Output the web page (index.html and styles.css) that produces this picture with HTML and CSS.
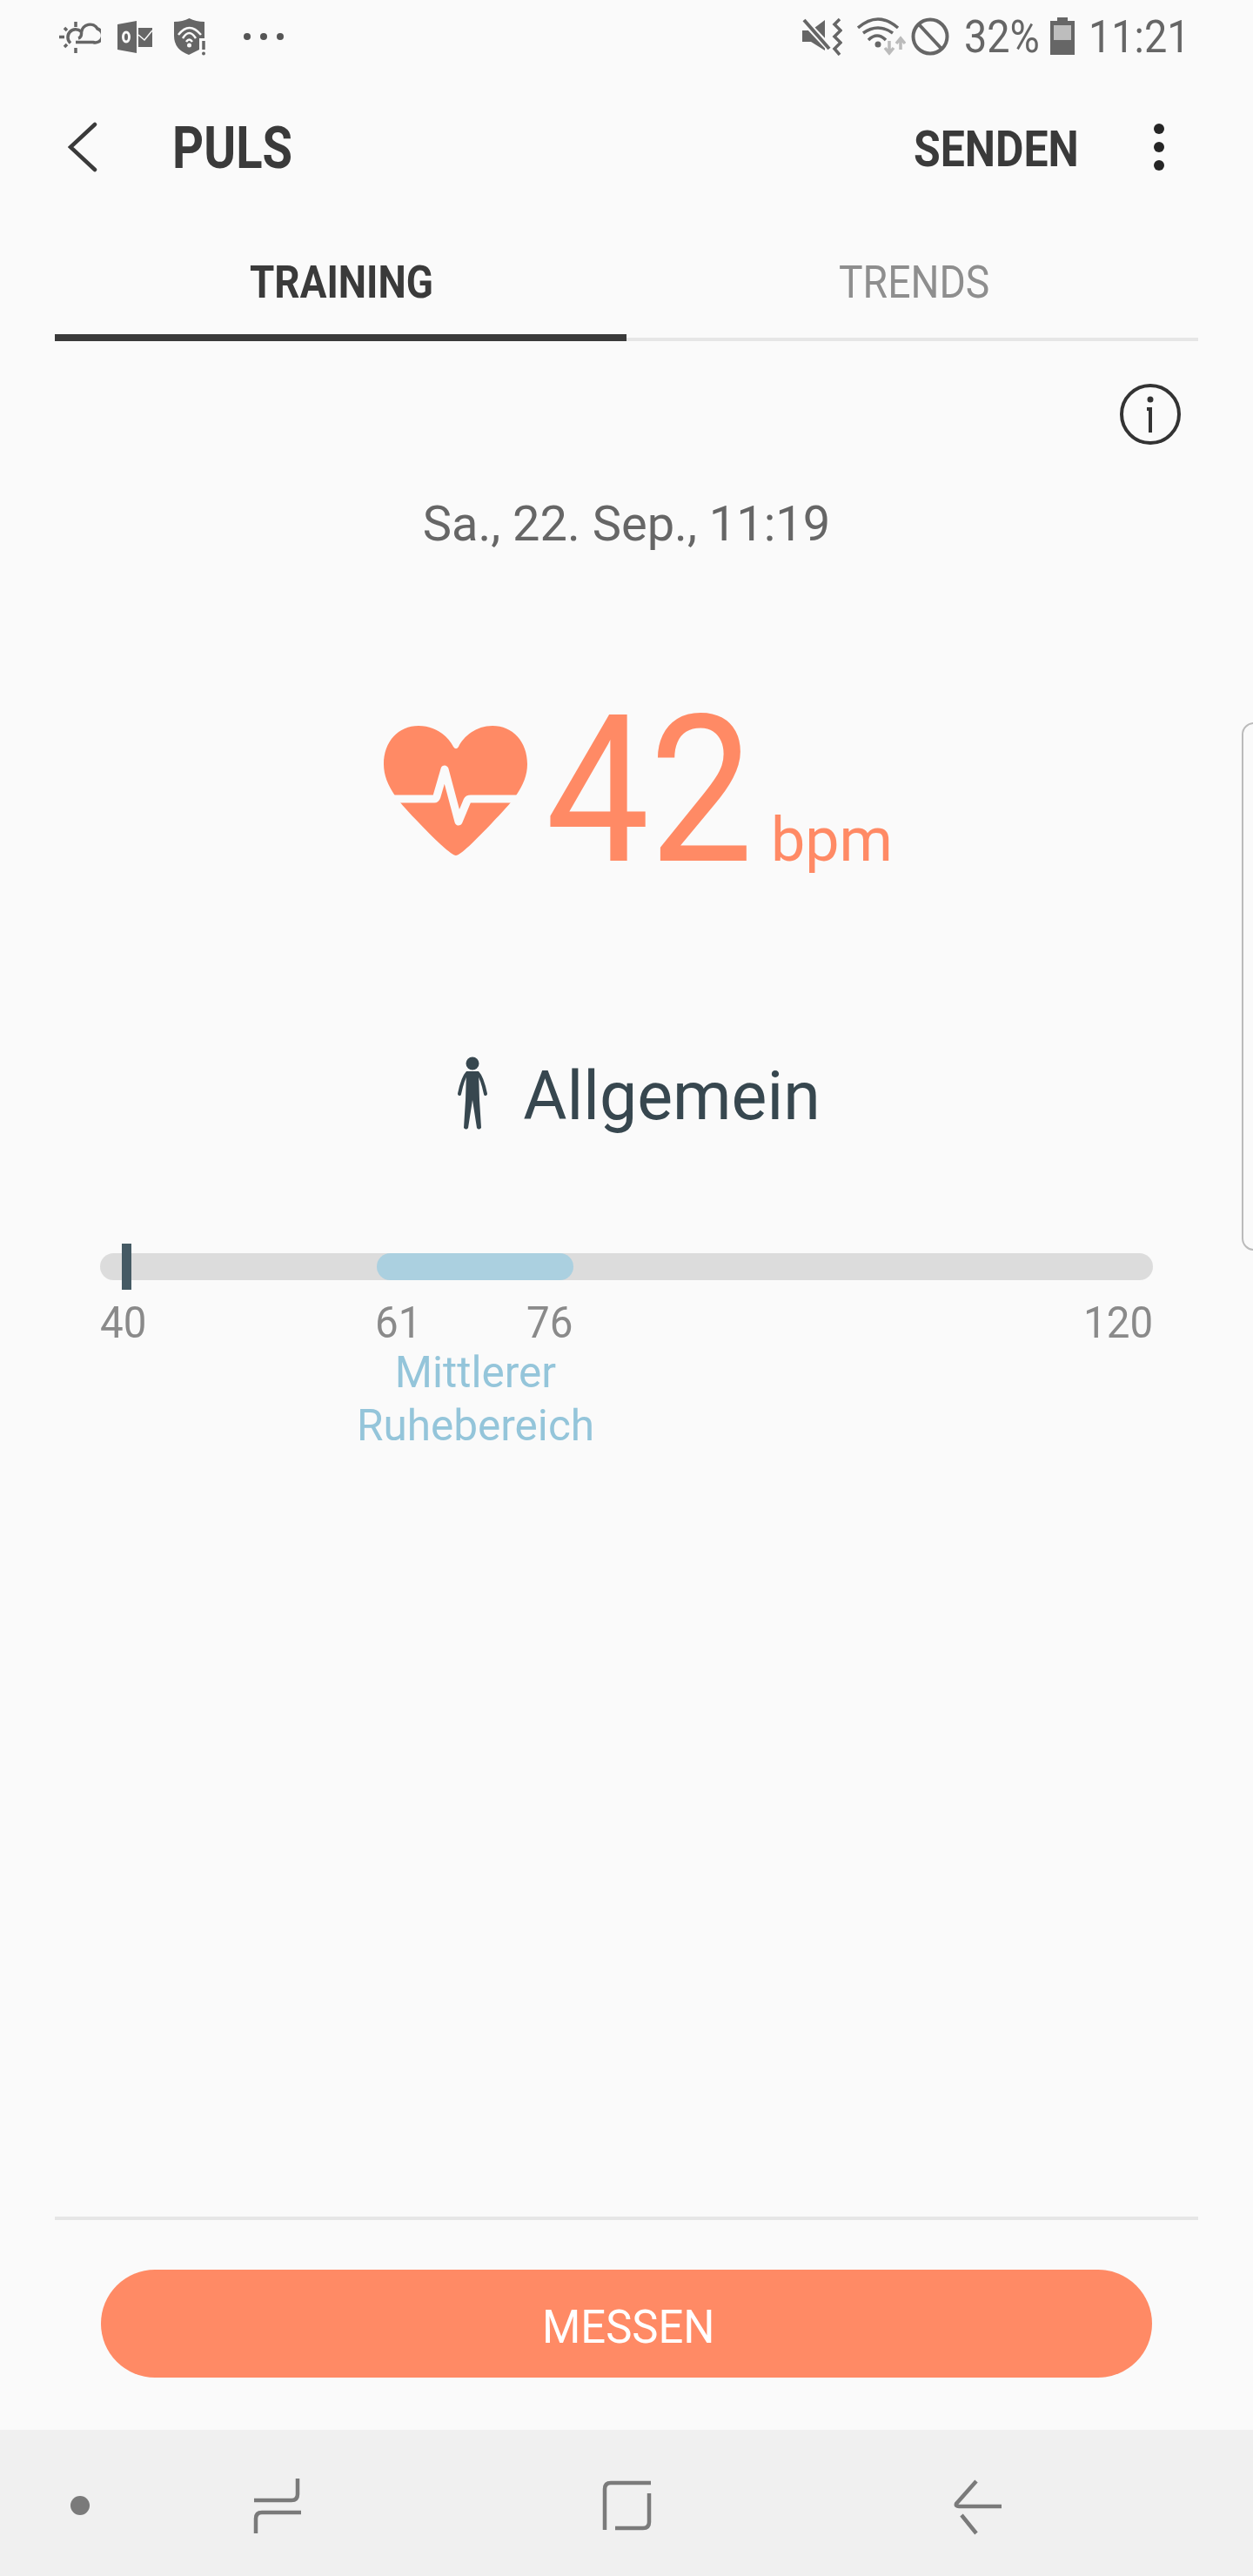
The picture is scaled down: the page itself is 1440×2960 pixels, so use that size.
FILE: index.html
```html
<!DOCTYPE html>
<html lang="de">
<head>
  <meta charset="UTF-8">
  <meta name="viewport" content="width=device-width, initial-scale=1.0">
  <title>Puls</title>
  <link rel="stylesheet" href="styles.css">
</head>
<body>
  <div class="screen">
    <!-- Statusleiste -->
    <div class="status">
      <div class="status-left">
        <svg class="ic-weather" width="48" height="38" viewBox="0 0 48 38" fill="none" stroke="#666" stroke-width="3.500">
          <path d="M22 19Q26 18 25.500 12A10 10 0 0 1 44 8A8 8 0 0 1 39 23.500H19"/>
          <path d="M25 11A9 9 0 1 0 13 24.500"/>
          <path d="M19 0V6M19 30V36M0 17.500H6M6 7l3 3M9 26l-3 3" stroke-width="3.500"/>
        </svg>
        <svg class="ic-outlook" width="40" height="38" viewBox="0 0 40 38">
          <path d="M0 4 22 0V37L0 33Z" fill="#666"/>
          <path d="M24 8H40V30H24Z" fill="#666"/>
          <path d="M24 16l7 6 9-11" fill="none" stroke="#fafafa" stroke-width="1.500"/>
          <ellipse cx="10" cy="18.500" rx="3.500" ry="5.500" fill="none" stroke="#fafafa" stroke-width="3"/>
        </svg>
        <svg class="ic-shield" width="38" height="43" viewBox="0 0 38 43">
          <path d="M0 4Q10 4 17.500 0Q25 4 35 4V23H29V36L17 42Q0 36 0 20Z" fill="#666"/>
          <path d="M5 19Q17.500 3 31 19M10 23Q17.500 11 25 23M14 27Q17.500 22 21 27" fill="none" stroke="#fafafa" stroke-width="2.500"/>
          <circle cx="17.500" cy="31" r="2.500" fill="#fafafa"/>
          <path d="M34 26V36" stroke="#666" stroke-width="3.500"/>
          <circle cx="34" cy="40.500" r="2" fill="#666"/>
        </svg>
        <div class="more-dots"><span></span><span></span><span></span></div>
      </div>
      <div class="status-right">
        <svg class="ic-mute" width="46" height="44" viewBox="0 0 46 44">
          <path d="M0 15H10L26 3V38L10 28H0Z" fill="#666"/>
          <path d="M3 5 31 35" stroke="#fafafa" stroke-width="8"/>
          <path d="M2 3 31 36" stroke="#666" stroke-width="4"/>
          <path d="M0 15H7V28H0Z" fill="#666"/>
          <path d="M43 2 37 8 44 15 37 22 44 29 37 36 43 43" fill="none" stroke="#666" stroke-width="3.500"/>
        </svg>
        <svg class="ic-wifi" width="56" height="44" viewBox="0 0 56 44">
          <path d="M1 12Q24 -8 47 12M7 18Q24 6 41 18M13 26Q23 16 33 26" fill="none" stroke="#666" stroke-width="3.500"/>
          <circle cx="24" cy="31" r="3.500" fill="#666"/>
          <path d="M37 27V41M32 35l5 6 5-6" fill="none" stroke="#bbb" stroke-width="3.500"/>
          <path d="M50 37V24M45 30l5-6 5 6" fill="none" stroke="#bbb" stroke-width="3.500"/>
        </svg>
        <svg class="ic-block" width="44" height="44" viewBox="0 0 44 44" fill="none" stroke="#666" stroke-width="4">
          <circle cx="22" cy="22" r="19.500"/>
          <path d="M9 8 35 36"/>
        </svg>
        <span class="status-pct"><span class="narrow">32%</span></span>
        <svg class="ic-battery" width="28" height="43" viewBox="0 0 28 43">
          <path d="M8 0H20V4H28V43H0V4H8Z" fill="#666"/>
          <path d="M4 9H24V26H4Z" fill="#bdbdbd"/>
        </svg>
        <span class="status-time"><span class="narrow">11:21</span></span>
      </div>
    </div>

    <!-- Titelleiste -->
    <div class="appbar">
      <svg class="back" width="34" height="58" viewBox="0 0 34 58" fill="none" stroke="#3a3a3a" stroke-width="4.500" stroke-linecap="round">
        <path d="M31 3 3 29 31 55"/>
      </svg>
      <div class="title"><span class="narrow">PULS</span></div>
      <div class="send"><span class="narrow">SENDEN</span></div>
      <div class="menu"><span></span><span></span><span></span></div>
    </div>

    <div class="tabs">
      <div class="tab active"><span class="narrow">TRAINING</span></div>
      <div class="tab"><span class="narrow">TRENDS</span></div>
    </div>

    <div class="main">
      <div class="info-row">
        <svg width="70" height="70" viewBox="0 0 70 70" fill="none" stroke="#333" stroke-width="4">
          <circle cx="35" cy="35" r="33"/>
          <path d="M31 29H35V56"/>
          <circle cx="35" cy="18" r="1.500" fill="#333"/>
        </svg>
      </div>
      <div class="date">Sa., 22. Sep., 11:19</div>

      <div class="reading">
        <svg class="heart" width="166" height="150" viewBox="0 0 166 150">
          <path d="M83 149 C78 149 60 132 40 111 C20 90 0 70 0 44 C0 18 17 0 40 0 C60 0 74 12 80 24 C82 27 84 27 86 24 C92 12 106 0 125 0 C148 0 165 18 165 44 C165 70 145 90 125 111 C105 132 88 149 83 149Z" fill="#ff8a65"/>
          <path d="M4 84H58Q60 84 61 81L70 50L86 110L96 86Q97 84 100 84H162" fill="none" stroke="#fafafa" stroke-width="9" stroke-linejoin="round"/>
        </svg>
        <div class="bpm-value"><span class="narrow">42</span></div>
        <div class="bpm-unit"><span class="narrow">bpm</span></div>
      </div>

      <div class="activity">
        <svg class="person" width="36" height="85" viewBox="0 0 36 85" fill="#37474f">
          <circle cx="18" cy="8" r="7.500"/>
          <path d="M11 17H25L26 50L28 82Q25 85 23 82L18 50L13 82Q11 85 8 82L10 50Z"/>
          <path d="M12 19Q7 24 3 43M24 19Q29 24 33 43" fill="none" stroke="#37474f" stroke-width="4" stroke-linecap="round"/>
        </svg>
        <span class="activity-name">Allgemein</span>
      </div>

      <div class="gauge">
        <div class="gauge-range"></div>
        <div class="gauge-mark"></div>
      </div>
      <div class="scale">
        <div class="scale-num"><span class="narrow">40</span></div>
        <div class="scale-range">
          <div class="range-nums">
            <div class="scale-num"><span class="narrow">61</span></div>
            <div class="scale-num"><span class="narrow">76</span></div>
          </div>
          <div class="range-label">Mittlerer<br>Ruhebereich</div>
        </div>
        <div class="scale-num scale-end"><span class="narrow">120</span></div>
      </div>
    </div>

    <div class="action">
      <div class="measure"><span class="narrow">MESSEN</span></div>
    </div>

    <!-- Navigationsleiste -->
    <div class="navbar">
      <span class="nav-dot"></span>
      <svg class="nav-recent" width="56" height="64" viewBox="0 0 56 64" fill="none" stroke="#7a7a7a" stroke-width="4.500">
        <path d="M51 0V18Q51 25 44 25H1M55 39H10Q3 39 3 46V63"/>
      </svg>
      <svg class="nav-home" width="58" height="60" viewBox="0 0 58 60" fill="none" stroke="#7a7a7a" stroke-width="4.500">
        <path d="M56 4H10Q3 4 3 11V58M54 16V49Q54 56 47 56H15"/>
      </svg>
      <svg class="nav-back" width="56" height="64" viewBox="0 0 56 64" fill="none" stroke="#7a7a7a" stroke-width="4.500">
        <path d="M26 2 3 28Q2 31 6 31H55M9 41 26 62"/>
      </svg>
    </div>

    <div class="edge-handle"></div>
  </div>
</body>
</html>
```

FILE: styles.css
```css
body {
  margin: 0;
  background-color: #fafafa;
  font-family: Roboto, sans-serif;
}

.screen {
  position: relative;
  display: flex;
  flex-direction: column;
  height: 2960px;
  overflow: hidden;
  background-color: #fafafa;
}

/* Samsung uses a condensed Roboto: squeeze the regular one */
.narrow {
  display: inline-block;
  white-space: nowrap;
  transform-origin: left center;
}

/* status bar */
.status {
  display: flex;
  justify-content: space-between;
  height: 84px;
  padding: 20px 82px 0 68px;
  box-sizing: border-box;
  color: #666;
}

.status-left {
  display: flex;
  align-items: flex-start;
}

.ic-weather { margin-top: 5px; }
.ic-outlook { margin: 4px 0 0 19px; }
.ic-shield { margin: 1px 0 0 25px; }

.more-dots {
  display: flex;
  gap: 11px;
  margin: 18px 0 0 42px;
}

.more-dots span {
  width: 8px;
  height: 8px;
  border-radius: 50%;
  background-color: #555;
}

.status-right {
  display: flex;
  align-items: flex-start;
}

.ic-mute { margin-top: 0; }
.ic-wifi { margin-left: 17px; }
.ic-block { margin-left: 6px; }

.status-pct,
.status-time {
  font-size: 52px;
  line-height: 46px;
}

.status-pct {
  width: 83px;
  margin-left: 17px;
}

.status-pct .narrow { transform: scaleX(.9); }

.ic-battery { margin-left: 16px; }

.status-time {
  width: 107px;
  margin-left: 16px;
}

.status-time .narrow { transform: scaleX(.9); }

/* title bar */
.appbar {
  display: flex;
  align-items: center;
  height: 172px;
  margin-top: -1px;
  color: #3a3a3a;
  font-weight: 700;
}

.back {
  margin-left: 78px;
}

.title {
  width: 136px;
  margin-left: 86px;
  padding-top: 3px;
  font-size: 66px;
}

.title .narrow { transform: scaleX(.85); }

.send {
  width: 185px;
  margin-left: auto;
  padding-top: 3px;
  font-size: 58px;
}

.send .narrow { transform: scaleX(.86); }

.menu {
  display: flex;
  flex-direction: column;
  gap: 9px;
  margin: 0 102px 0 91px;
}

.menu span {
  width: 12px;
  height: 12px;
  border-radius: 50%;
  background-color: #252525;
}

/* tabs */
.tabs {
  display: flex;
  margin: 0 63px;
  height: 137px;
  box-sizing: border-box;
  border-bottom: 4px solid #e6e6e6;
}

.tab {
  flex: 1;
  display: flex;
  justify-content: center;
  padding-top: 39px;
  height: 137px;
  box-sizing: border-box;
  font-size: 52px;
  line-height: 62px;
  color: #8e8e8e;
}

.tab .narrow {
  width: 170px;
  transform: scaleX(.89);
}

.tab.active {
  color: #3a3a3a;
  font-weight: 700;
  border-bottom: 8px solid #3a3a3a;
}

.tab.active .narrow {
  width: 210px;
  transform: scaleX(.88);
}

/* main content */
.main {
  flex: 1;
}

.info-row {
  display: flex;
  justify-content: flex-end;
  padding: 49px 83px 0 0;
}

.date {
  margin-top: 61px;
  text-align: center;
  font-size: 56px;
  line-height: 60px;
  color: #666;
}

.reading {
  display: flex;
  align-items: baseline;
  justify-content: center;
  margin-top: 159px;
  padding-left: 18px;
  color: #ff8a65;
}

.heart {
  align-self: flex-start;
  margin-top: 43px;
}

.bpm-value {
  width: 227px;
  margin-left: 20px;
  font-size: 236px;
  line-height: 236px;
}

.bpm-value .narrow { transform: scaleX(.9); }

.bpm-unit {
  width: 131px;
  margin-left: 32px;
  font-size: 70px;
}

.bpm-unit .narrow { transform: scaleX(1); }

.activity {
  display: flex;
  align-items: center;
  justify-content: center;
  gap: 40px;
  margin-top: 188px;
  padding-left: 28px;
  height: 90px;
}

.person {
  margin-bottom: 8px;
}

.activity-name {
  font-size: 77px;
  line-height: 90px;
  color: #37474f;
}

/* heart rate gauge */
.gauge {
  position: relative;
  height: 31px;
  margin: 135px 115px 0;
  border-radius: 16px;
  background-color: #dcdcdc;
}

.gauge-range {
  position: absolute;
  left: 318px;
  width: 226px;
  top: 0;
  bottom: 0;
  border-radius: 16px;
  background-color: #abd0e0;
}

.gauge-mark {
  position: absolute;
  left: 25px;
  top: -11px;
  width: 11px;
  height: 53px;
  background-color: #455a64;
}

.scale {
  display: grid;
  grid-template-columns: 316px 229px 1fr;
  margin: 19px 115px 0;
}

.scale-num {
  font-size: 50px;
  line-height: 60px;
  color: #8a8a8a;
}

.scale-num .narrow { transform: scaleX(.95); }

.scale-end {
  text-align: right;
}

.scale-end .narrow {
  width: 80px;
}

.range-nums {
  display: flex;
  justify-content: space-between;
}

.range-nums .scale-num {
  width: 55px;
}

.range-label {
  margin: -3px -30px 0 -28px;
  text-align: center;
  font-size: 49.500px;
  line-height: 61px;
  color: #94c5da;
}

/* measure button */
.action {
  margin: 0 63px;
  padding: 57px 53px 60px;
  border-top: 4px solid #e6e6e6;
}

.measure {
  display: flex;
  align-items: center;
  justify-content: center;
  height: 124px;
  padding-top: 6px;
  box-sizing: border-box;
  border-radius: 62px;
  background-color: #ff8a65;
  color: #fff;
  font-size: 54px;
}

.measure .narrow {
  width: 194px;
  transform: scaleX(.94);
}

/* bottom navigation */
.navbar {
  position: relative;
  height: 168px;
  background-color: #f0f0f0;
}

.nav-dot {
  position: absolute;
  left: 81px;
  top: 76px;
  width: 22px;
  height: 22px;
  border-radius: 50%;
  background-color: #7a7a7a;
}

.nav-recent {
  position: absolute;
  left: 291px;
  top: 56px;
}

.nav-home {
  position: absolute;
  left: 692px;
  top: 57px;
}

.nav-back {
  position: absolute;
  left: 1096px;
  top: 57px;
}

.edge-handle {
  position: absolute;
  left: 1427px;
  top: 830px;
  width: 30px;
  height: 607px;
  box-sizing: border-box;
  border: 2px solid #bbb;
  border-radius: 14px;
}
```
